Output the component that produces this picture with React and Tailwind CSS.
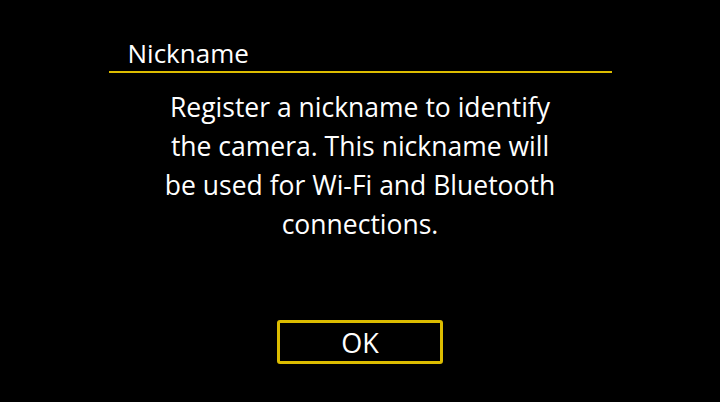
export default function App() {
  return (
    <div className="w-[720px] h-[402px] bg-black flex flex-col items-center text-white font-['Open_Sans',sans-serif]">
      <div className="w-[503px] mt-[36px] border-b-2 border-[#dcbc00] pl-[19px] text-[26px] leading-[34px] pb-[1px]">
        Nickname
      </div>
      <p className="mt-[15px] text-center text-[26.5px] leading-[39px]">
        Register a nickname to identify
        <br />
        the camera. This nickname will
        <br />
        be used for Wi-Fi and Bluetooth
        <br />
        connections.
      </p>
      <div className="mt-auto mb-[38px] w-[166px] h-[44px] border-[3px] border-[#dcbc00] rounded-[3px] flex items-center justify-center text-[27px] leading-none">
        OK
      </div>
    </div>
  );
}
